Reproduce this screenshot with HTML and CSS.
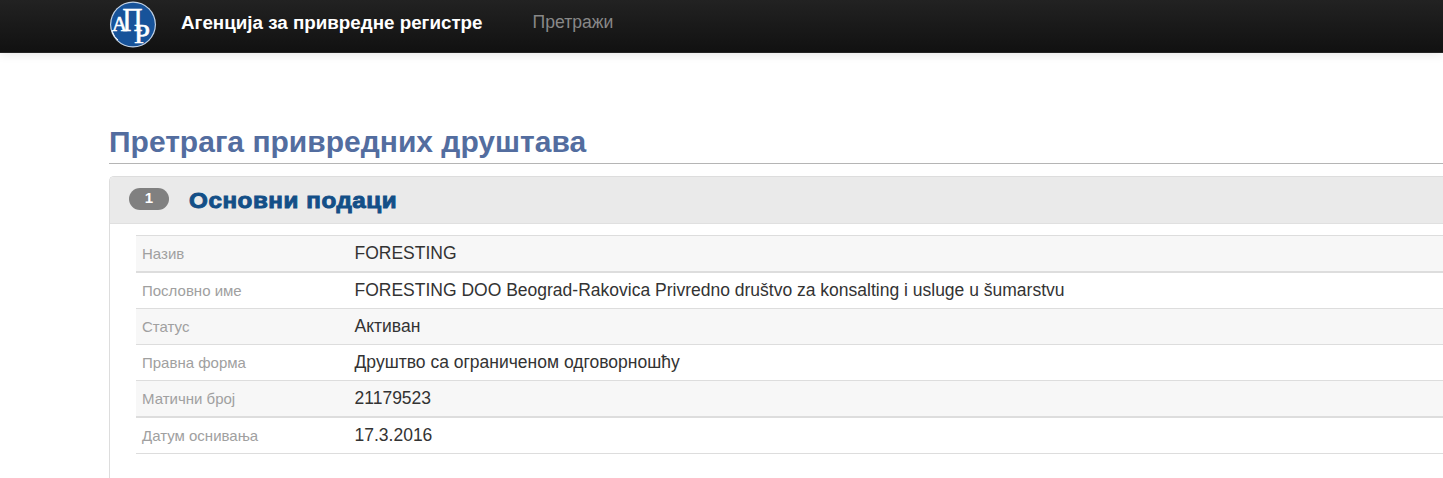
FILE: index.html
```
<!DOCTYPE html>
<html lang="sr">
<head>
    <meta charset="UTF-8">
    <meta name="viewport" content="width=device-width, initial-scale=1.0">
    <title>Агенција за привредне регистре</title>
    <link rel="stylesheet" href="styles.css">
</head>
<body>
    <header class="navbar">
        <svg class="logo" width="48" height="48" viewBox="0 0 48 48">
            <circle cx="24" cy="24.5" r="23" fill="#c3d3e6"/>
            <circle cx="24" cy="24.5" r="21.8" fill="#17539a"/>
            <path d="M3 31q2 6 6 9" fill="none" stroke="#fff"/>
            <g class="logo-text">
                <text x="3" y="31" font-size="21" textLength="15" lengthAdjust="spacingAndGlyphs">А</text>
                <text x="13.5" y="31" font-size="33" textLength="20" lengthAdjust="spacingAndGlyphs">П</text>
                <text x="25" y="42.5" font-size="27" textLength="16" lengthAdjust="spacingAndGlyphs">Р</text>
            </g>
        </svg>
        <a class="brand">Агенција за привредне регистре</a>
        <nav><a class="nav-link">Претражи</a></nav>
    </header>
    <main class="content">
        <h1 class="page-title">Претрага привредних друштава</h1>
        <section class="panel">
            <div class="panel-heading">
                <span class="badge">1</span>
                <h2 class="panel-title">Основни подаци</h2>
            </div>
            <dl class="details">
                <div class="row thick-bottom"><dt>Назив</dt><dd>FORESTING</dd></div>
                <div class="row"><dt>Пословно име</dt><dd>FORESTING DOO Beograd-Rakovica Privredno društvo za konsalting i usluge u šumarstvu</dd></div>
                <div class="row"><dt>Статус</dt><dd>Активан</dd></div>
                <div class="row"><dt>Правна форма</dt><dd>Друштво са ограниченом одговорношћу</dd></div>
                <div class="row thick-bottom"><dt>Матични број</dt><dd>21179523</dd></div>
                <div class="row"><dt>Датум оснивања</dt><dd>17.3.2016</dd></div>
            </dl>
        </section>
    </main>
</body>
</html>
```
FILE: styles.css
```
* {
    box-sizing: border-box;
}
body {
    display: flex;
    flex-direction: column;
    margin: 0;
    height: 100vh;
    background-color: #fff;
    color: #333;
    font-family: "Liberation Sans", Arial, sans-serif;
}
.navbar {
    display: flex;
    flex: none;
    height: 53px;
    padding-left: 109px;
    background: linear-gradient(#222, #111);
    border-bottom: 1px solid #252525;
    box-shadow: 0 1px 10px rgba(0, 0, 0, 0.1);
}
.logo {
    flex: none;
}
.logo-text {
    fill: #fff;
    stroke: #fff;
    stroke-width: 0.6px;
    font-family: "Liberation Serif", serif;
}
.brand {
    margin-left: 24px;
    font-size: 18.8px;
    font-weight: bold;
    line-height: 45px;
    color: #fff;
}
.nav-link {
    margin-left: 50px;
    font-size: 17.6px;
    line-height: 44px;
    color: #888;
}
.content {
    display: flex;
    flex: 1;
    flex-direction: column;
    padding: 68px 0 0 109px;
}
.page-title {
    height: 43px;
    margin: 0 0 12px;
    border-bottom: 1px solid #b5b5b5;
    font-size: 30px;
    line-height: 42px;
    color: #536d9f;
}
.panel {
    flex: 1;
    border: 1px solid #ddd;
    border-width: 1px 0 0 1px;
    border-radius: 5px 0 0 0;
}
.panel-heading {
    display: flex;
    height: 47px;
    padding-left: 19px;
    background-color: #eaeaea;
    border-bottom: 1px solid #e0e0e0;
    border-radius: 4px 0 0 0;
}
.badge {
    width: 40px;
    height: 22px;
    margin-top: 11px;
    border-radius: 11px;
    background-color: #808080;
    color: #fff;
    font-size: 15px;
    font-weight: bold;
    line-height: 20px;
    text-align: center;
}
.panel-title {
    margin: 0 0 0 20px;
    font-size: 21.5px;
    letter-spacing: 0.5px;
    line-height: 48px;
    color: #134f87;
    -webkit-text-stroke: 0.9px #134f87;
    transform: scaleX(1.125);
    transform-origin: left;
}
.details {
    margin: 11px 0 0 26px;
    border-top: 1px solid #ddd;
}
.row {
    display: grid;
    grid-template-columns: 212.5px 1fr;
    height: 36px;
    padding-left: 6px;
    border-bottom: 1px solid #ddd;
    line-height: 35px;
}
.row:nth-child(odd) {
    background-color: #f7f7f7;
}
.row.thick-bottom {
    height: 37px;
    border-bottom-width: 2px;
}
.row dt {
    font-size: 15px;
    line-height: 36px;
    color: #a0a0a0;
}
.row dd {
    margin: 0;
    font-size: 17.5px;
}
```
